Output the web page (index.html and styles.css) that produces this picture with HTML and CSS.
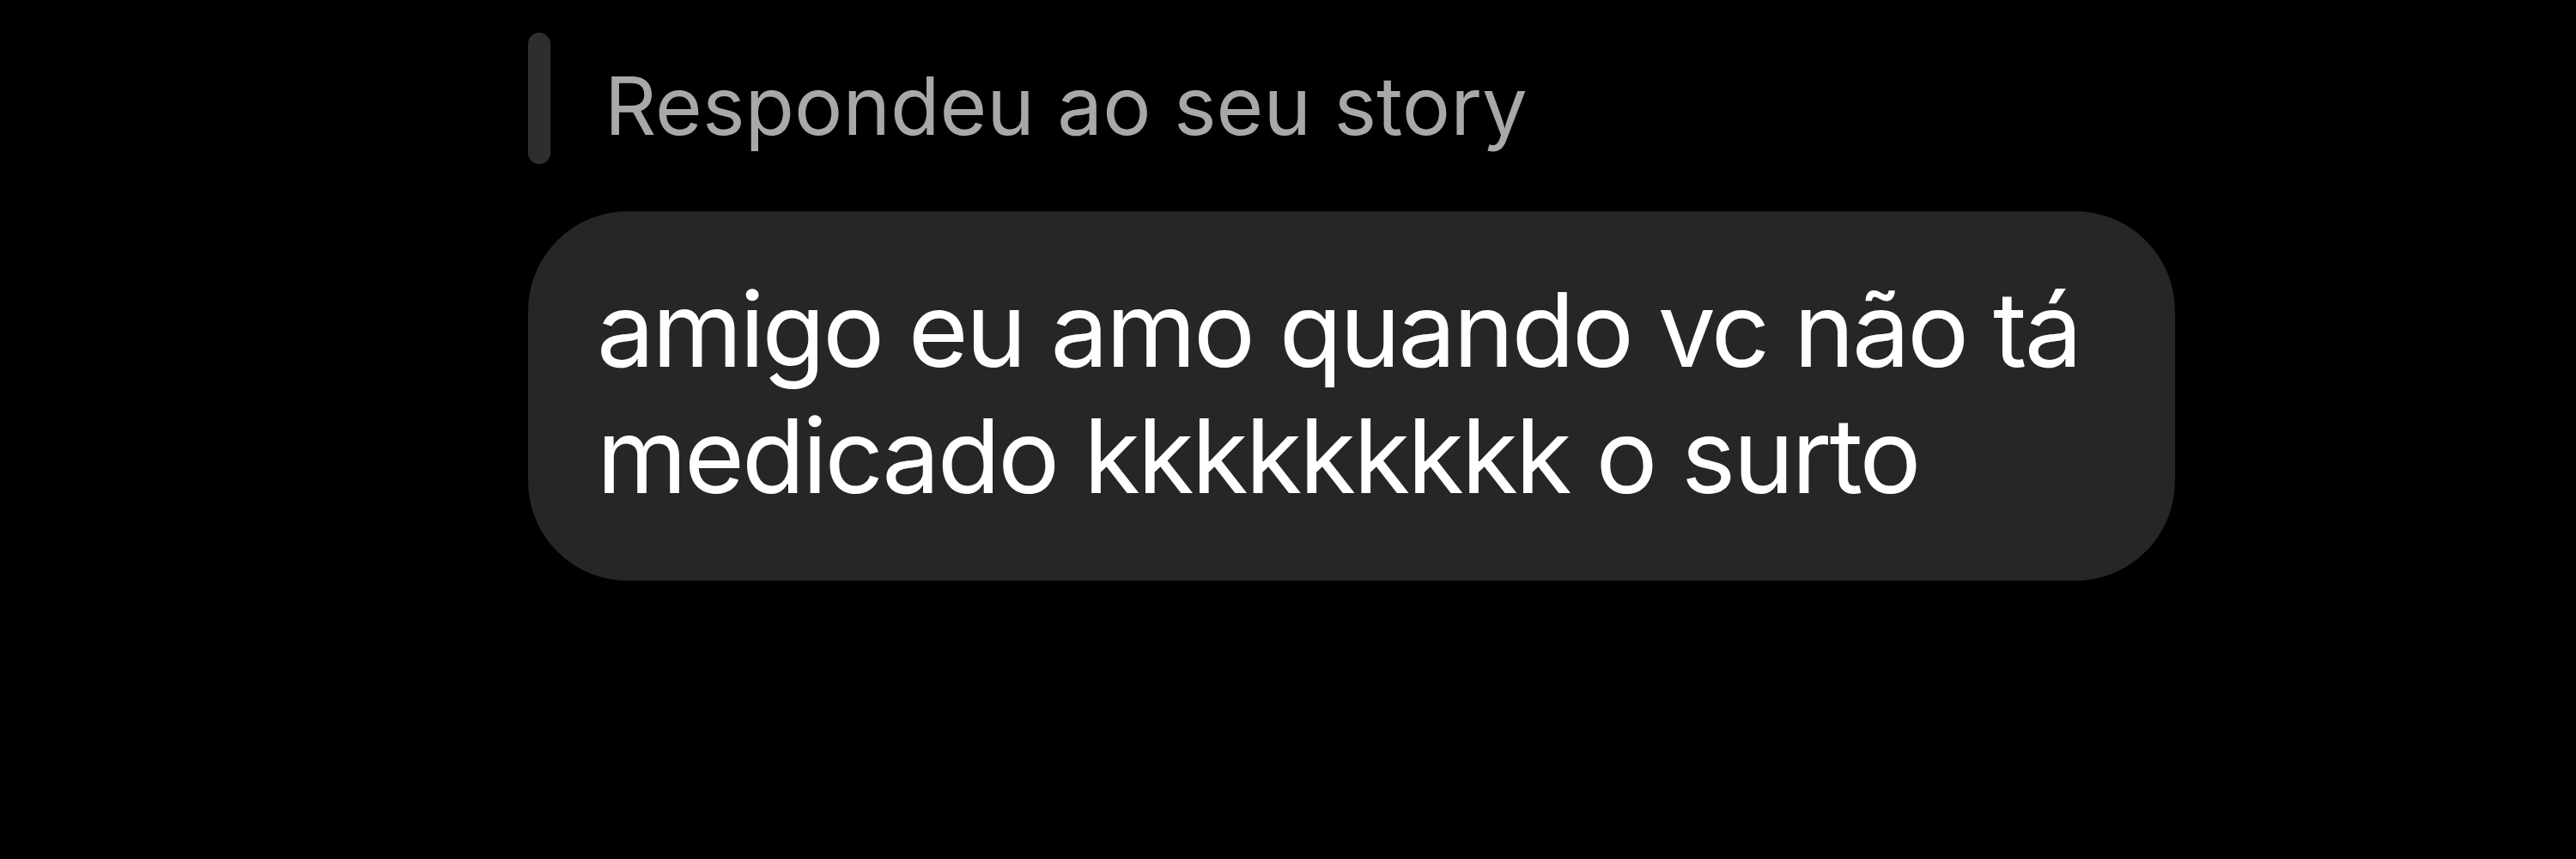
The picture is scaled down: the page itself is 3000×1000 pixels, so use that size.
FILE: index.html
```html
<!DOCTYPE html>
<html lang="pt-BR">
<head>
    <meta charset="UTF-8">
    <meta name="viewport" content="width=device-width, initial-scale=1.0">
    <title>Mensagem</title>
    <link rel="stylesheet" href="styles.css">
</head>
<body>

    <div class="thread">
        <div class="reply-label">
            <span class="reply-bar"></span>
            <span class="reply-text">Respondeu ao seu story</span>
        </div>

        <div class="bubble">
            <p>amigo eu amo quando vc não tá medicado kkkkkkkkk o surto</p>
        </div>
    </div>

</body>
</html>
```

FILE: styles.css
```css
body {
    font-family: Inter, "Liberation Sans", Arial, sans-serif;
    background-color: #000;
    color: #fff;
    margin: 0;
    padding: 0;
}

.thread {
    padding: 38px 0 0 615px;
    display: flex;
    flex-direction: column;
    align-items: flex-start;
    gap: 55px;
}

.reply-label {
    display: flex;
    align-items: flex-start;
    gap: 63px;
}

.reply-bar {
    width: 26px;
    height: 153px;
    border-radius: 13px;
    background-color: #2e2e2e;
}

.reply-text {
    padding-top: 29px;
    font-size: 94px;
    line-height: 1.21;
    color: #a8a8a8;
}

.bubble {
    width: 1918px;
    box-sizing: border-box;
    padding: 64px 80px 72px 80px;
    background-color: #262626;
    border-radius: 116px;
}

.bubble p {
    margin: 0;
    font-size: 120px;
    line-height: 147px;
    letter-spacing: -3px;
    color: #fff;
}
```
